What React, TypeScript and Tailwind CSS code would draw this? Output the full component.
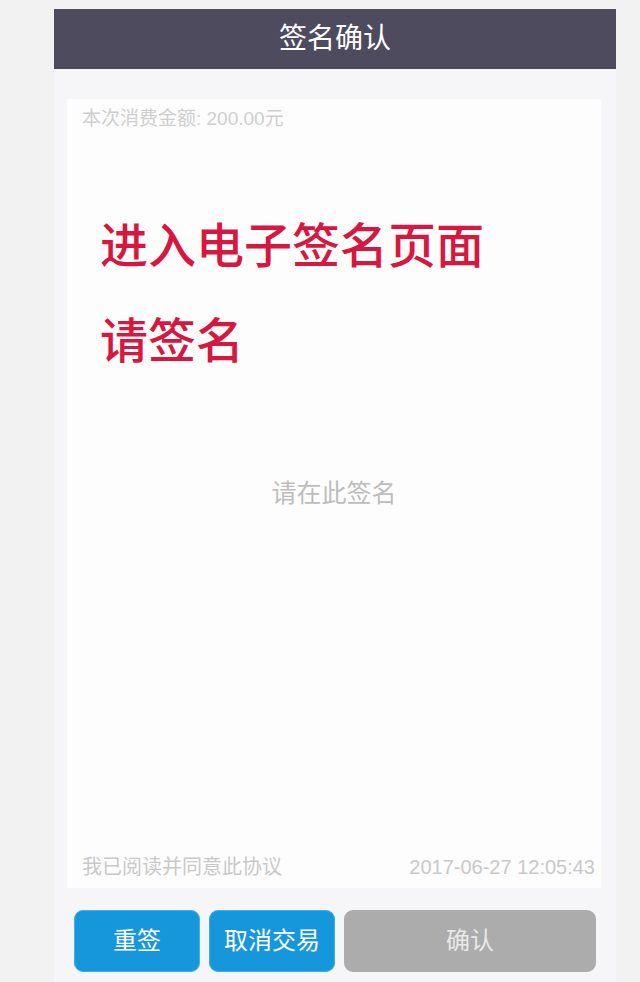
import React from 'react';

const font = { fontFamily: '"Liberation Sans", "Noto Sans CJK SC", sans-serif' };

export default function App() {
    return (
        <div className="w-[640px] h-[982px] bg-[#f2f2f3] pt-[9px] pl-[54px] pr-[24px] flex flex-col" style={font}>
            {/* title bar */}
            <div className="h-[60px] bg-[#4e4b5f] flex items-center justify-center shrink-0">
                <span className="text-white text-[28px] leading-none">签名确认</span>
            </div>

            <div className="flex-1 bg-[#f6f6f8] flex flex-col pt-[30px] pb-[11px]">
                {/* signature area */}
                <div className="ml-[13px] mr-[15px] h-[789px] bg-[#fdfdfd] flex flex-col pt-[9px] pb-[9px] pl-[15px] pr-[6px]">
                    <div className="text-[19px] leading-[22px] text-[#cfcfcf]">本次消费金额: 200.00元</div>

                    <div className="mt-[93px] pl-[18px] text-[#d7173f] text-[48px] leading-[48px] font-medium">进入电子签名页面</div>
                    <div className="mt-[47px] pl-[18px] text-[#d7173f] text-[48px] leading-[48px] font-medium">请签名</div>

                    <div className="mt-[115px] pr-[9px] text-center text-[25px] leading-[25px] text-[#bdbdbd]">请在此签名</div>

                    <div className="flex-1" />
                    <div className="flex justify-between items-center text-[20px] leading-[24px] text-[#c9c9c9]">
                        <span>我已阅读并同意此协议</span>
                        <span>2017-06-27 12:05:43</span>
                    </div>
                </div>

                {/* actions */}
                <div className="mt-[22px] mx-[20px] flex gap-[9px] h-[62px]">
                    <button className="w-[126px] rounded-[9px] bg-[#1797db] border border-[#3fb0ea] text-white text-[24px]">重签</button>
                    <button className="w-[126px] rounded-[9px] bg-[#1797db] border border-[#3fb0ea] text-white text-[24px]">取消交易</button>
                    <button className="flex-1 rounded-[9px] bg-[#acacac] text-[#e9e9e9] text-[24px]">确认</button>
                </div>
            </div>
        </div>
    );
}
